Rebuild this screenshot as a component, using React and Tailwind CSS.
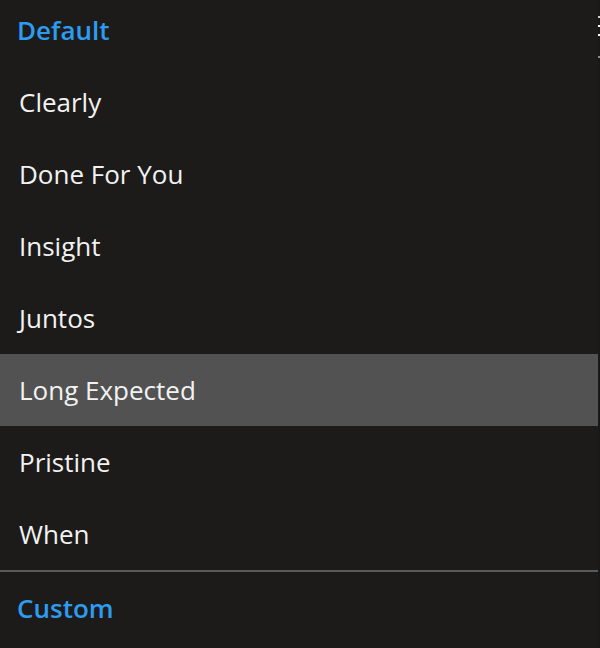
import { useState } from "react";

const themes = [
  "Clearly",
  "Done For You",
  "Insight",
  "Juntos",
  "Long Expected",
  "Pristine",
  "When",
];

function ThemeList() {
  const [selected, setSelected] = useState("Long Expected");

  return (
    <div className="flex-1">
      {/* Default group */}
      <div className="flex h-[66px] items-center pb-[6px] pl-[17px] text-[26px] font-semibold text-[#2d9cf0]">
        Default
      </div>

      {themes.map((name) => (
        <div
          key={name}
          onClick={() => setSelected(name)}
          className={
            "flex h-[72px] items-center pl-[19px] text-[26px] text-[#f2f2f2] " +
            (selected === name ? "bg-[#525252]" : "")
          }
        >
          {name}
        </div>
      ))}

      <div className="h-[2px] bg-[#5a5a5a]" />

      {/* Custom group */}
      <div className="flex h-[72px] items-center pl-[17px] text-[26px] font-semibold text-[#2d9cf0]">
        Custom
      </div>
    </div>
  );
}

function App() {
  return (
    <div
      className="flex h-[648px] w-[600px] overflow-hidden bg-[#1c1b1a]"
      style={{ fontFamily: '"Open Sans", "Noto Sans", sans-serif' }}
    >
      <ThemeList />
      {/* scroll strip */}
      <div className="flex w-[2px] flex-col bg-[#181818]">
        <div className="mt-[16px] h-[2px] bg-[#cfcfcf]" />
        <div className="mt-[7px] h-[2px] bg-white" />
        <div className="mt-[7px] h-[2px] bg-white" />
        <div className="mt-[20px] h-[2px] bg-[#8a8a8a]" />
      </div>
    </div>
  );
}

export default App;
